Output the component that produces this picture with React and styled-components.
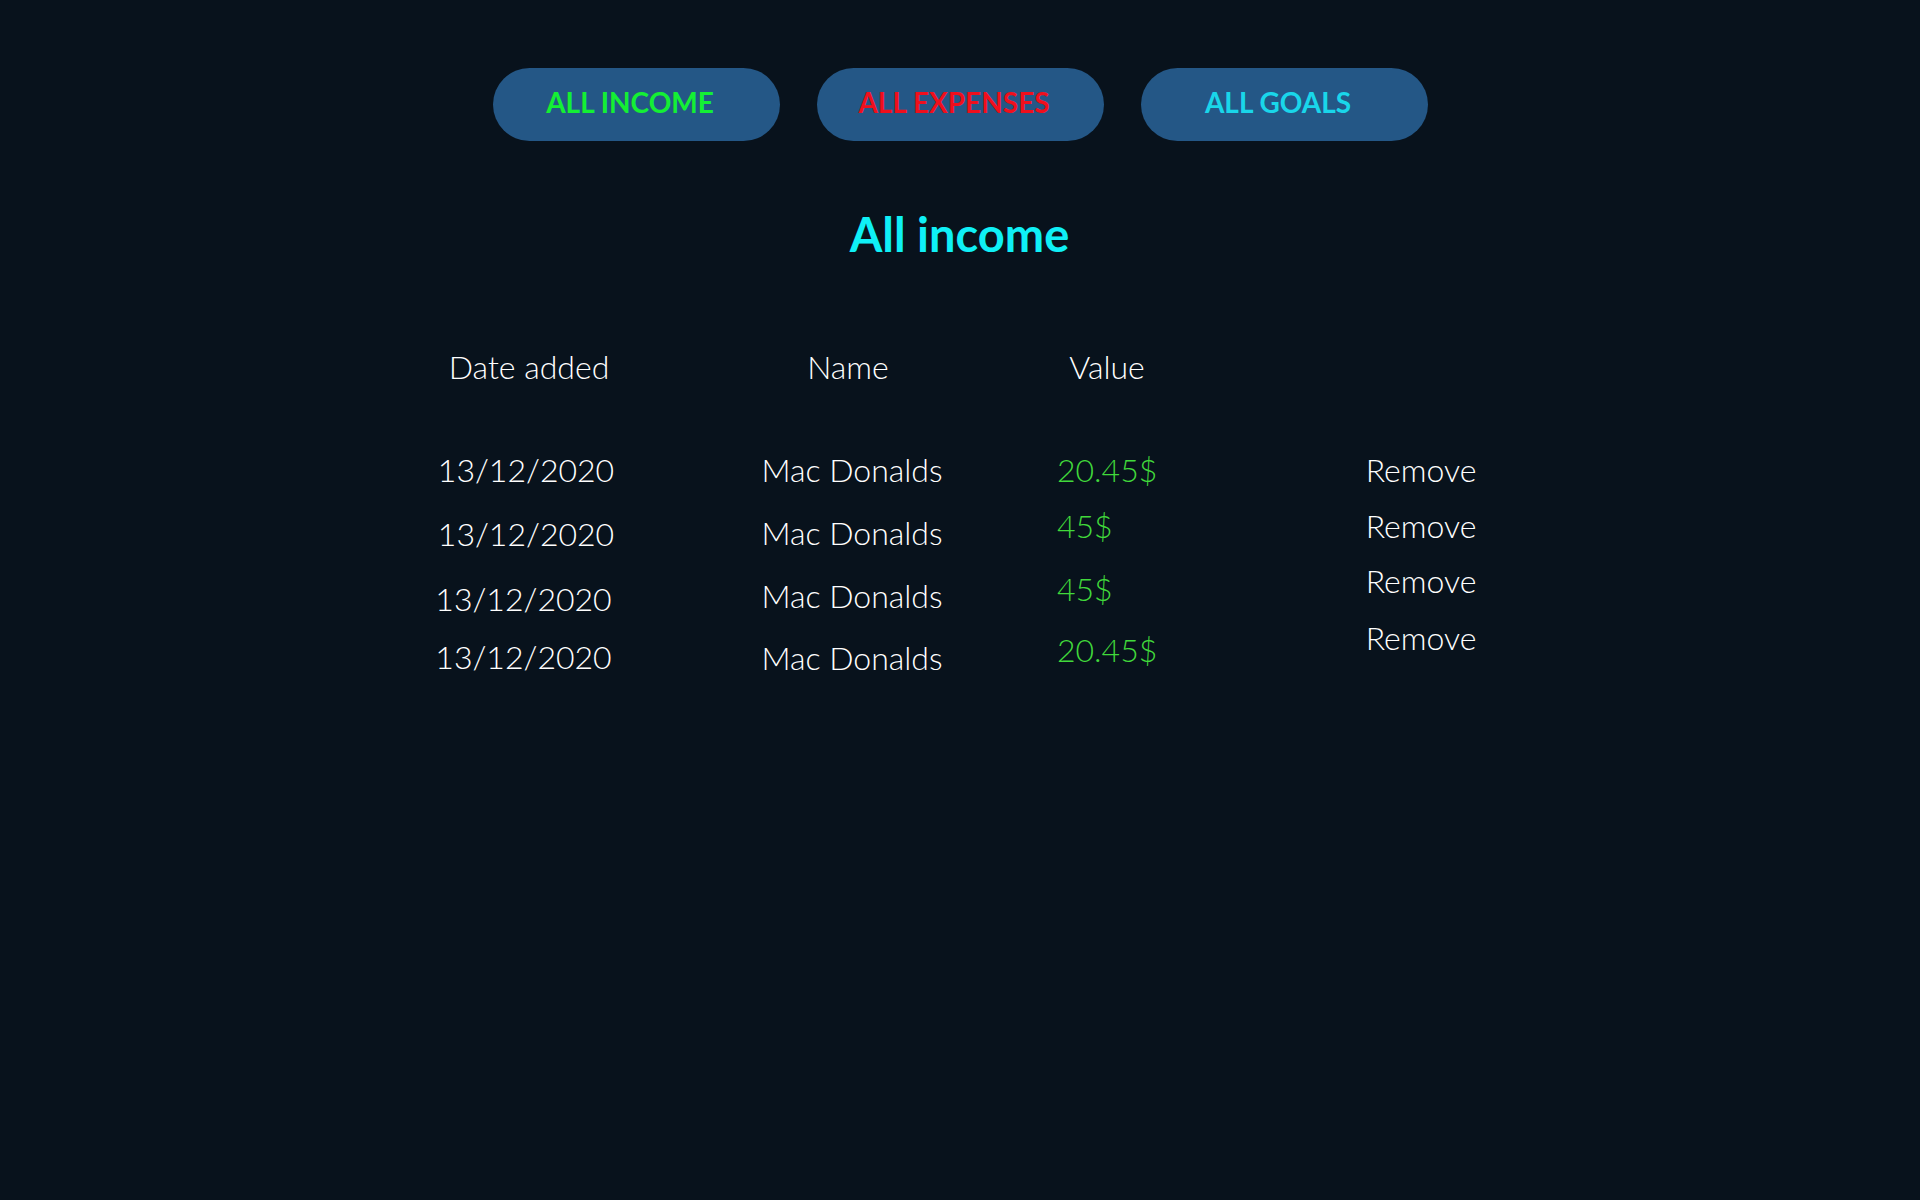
import React from "react";
import styled, { createGlobalStyle } from "styled-components";

const GlobalStyle = createGlobalStyle`
  html, body {
    margin: 0;
    padding: 0;
    background: #08121c;
  }
  body {
    font-family: "Lato", "Open Sans", "Liberation Sans", sans-serif;
    min-height: 1200px;
  }
`;

const Page = styled.div`
  min-height: 1200px;
  background: #08121c;
  padding-top: 68px;
  box-sizing: border-box;
`;

const Nav = styled.nav`
  display: flex;
  justify-content: center;
  gap: 37px;
`;

const NavButton = styled.button`
  width: 287px;
  height: 73px;
  border: none;
  border-radius: 37px;
  background: #245786;
  color: ${(p) => p.$color};
  font-family: "Lato", sans-serif;
  font-weight: 700;
  font-size: 28px;
  padding: 0 12px 5px 0;
  cursor: pointer;
  text-transform: uppercase;
`;

const Title = styled.h1`
  margin: 65px 0 0;
  text-align: center;
  font-family: "Lato", sans-serif;
  font-weight: 700;
  font-size: 47px;
  line-height: 56px;
  color: #0ff0f6;
  padding-right: 1px;
`;

const Table = styled.div`
  display: flex;
  align-items: flex-start;
  margin: 85px 0 0 426px;
`;

const Column = styled.div`
  display: flex;
  flex-direction: column;
  width: ${(p) => p.$width}px;
  margin-left: ${(p) => p.$ml}px;
  text-align: ${(p) => p.$align};
`;

const HeadCell = styled.div`
  height: 40px;
  font-size: 32px;
  font-weight: 300;
  line-height: 40px;
  color: #ffffff;
  text-align: center;
  white-space: nowrap;
  margin-left: ${(p) => p.$shift || 0}px;
`;

const Cell = styled.div`
  margin-top: ${(p) => p.$mt}px;
  margin-left: ${(p) => p.$shift || 0}px;
  height: 40px;
  font-size: 32px;
  font-weight: 300;
  line-height: 40px;
  white-space: nowrap;
  color: ${(p) => (p.$money ? "#41d93b" : "#ffffff")};
  cursor: ${(p) => (p.$action ? "pointer" : "default")};
`;

const columns = [
  {
    key: "date",
    title: "Date added",
    width: 200,
    ml: 0,
    align: "center",
    headShift: 6,
    gaps: [63, 24, 25, 18],
    shifts: [0, 0, -5, -5],
    values: ["13/12/2020", "13/12/2020", "13/12/2020", "13/12/2020"],
  },
  {
    key: "name",
    title: "Name",
    width: 200,
    ml: 126,
    align: "center",
    headShift: -8,
    gaps: [63, 23, 23, 22],
    values: ["Mac Donalds", "Mac Donalds", "Mac Donalds", "Mac Donalds"],
  },
  {
    key: "value",
    title: "Value",
    width: 100,
    ml: 105,
    align: "left",
    gaps: [63, 16, 23, 21],
    money: true,
    values: ["20.45$", "45$", "45$", "20.45$"],
  },
  {
    key: "remove",
    title: "",
    width: 200,
    ml: 164,
    align: "center",
    gaps: [63, 16, 15, 17],
    action: true,
    values: ["Remove", "Remove", "Remove", "Remove"],
  },
];

export default function App() {
  return (
    <Page>
      <GlobalStyle />
      <Nav>
        <NavButton $color="#14ef34">All income</NavButton>
        <NavButton $color="#f00f1c">All expenses</NavButton>
        <NavButton $color="#19d6ea">All goals</NavButton>
      </Nav>
      <Title>All income</Title>
      <Table>
        {columns.map((col) => (
          <Column key={col.key} $width={col.width} $ml={col.ml} $align={col.align}>
            <HeadCell $shift={col.headShift}>{col.title}</HeadCell>
            {col.values.map((v, i) => (
              <Cell
                key={i}
                $mt={col.gaps[i]}
                $money={col.money}
                $action={col.action}
                $shift={col.shifts ? col.shifts[i] : 0}
              >
                {v}
              </Cell>
            ))}
          </Column>
        ))}
      </Table>
    </Page>
  );
}
